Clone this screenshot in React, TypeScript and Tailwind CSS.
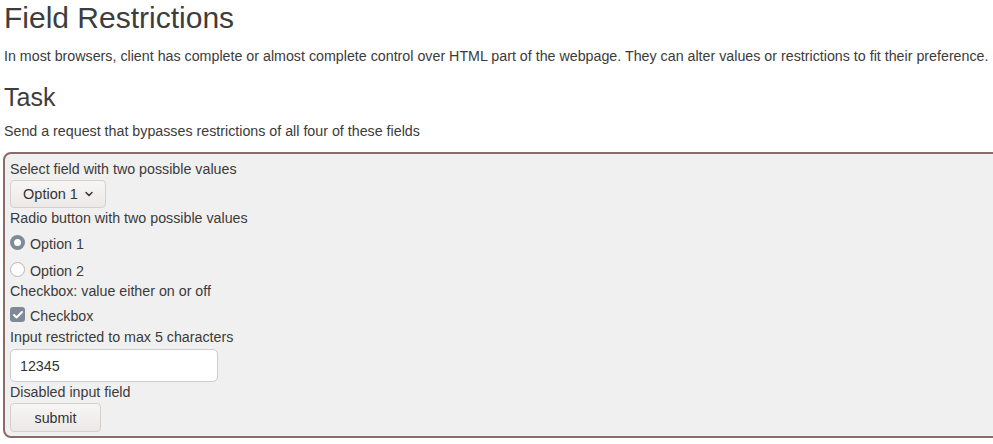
import { ChevronDown, Check } from 'lucide-react';

const App = () => {
  return (
    <div className="min-h-[444px] w-[993px] overflow-hidden bg-white text-[#3b3b3b] font-['Liberation_Sans',Arial,sans-serif]">
      <h1 className="pl-[4px] pt-[1px] text-[30px] leading-[34px] text-[#3d3d3d]">Field Restrictions</h1>
      <p className="pl-[4px] mt-[12px] text-[14.25px] leading-[18px]">
        In most browsers, client has complete or almost complete control over HTML part of the webpage. They can alter values or restrictions to fit their preference.
      </p>
      <h2 className="pl-[4px] mt-[18px] text-[25px] leading-[28px] text-[#3d3d3d]">Task</h2>
      <p className="pl-[4px] mt-[11px] text-[14.25px] leading-[18px]">Send a request that bypasses restrictions of all four of these fields</p>

      <form className="ml-[3px] mt-[12px] w-[1010px] rounded-[8px] border-2 border-[#8b6a68] bg-[#f1f0f0] pl-[5px] pt-[6px] pb-[4px] text-[14.25px] leading-[18px]">
        <div>Select field with two possible values</div>
        <div className="mt-[2px] flex h-[28px] w-[96px] items-center justify-center gap-[5px] rounded-[4px] border border-[#d4d0cc] bg-gradient-to-b from-[#f7f6f5] to-[#ebe9e7] pl-[2px] text-[14.5px] text-[#333]">
          <span>Option 1</span>
          <ChevronDown size={12} strokeWidth={3} className="text-[#333]" />
        </div>
        <div className="mt-[1px]">Radio button with two possible values</div>
        <label className="mt-[5px] flex items-center gap-[5px]">
          <span className="flex h-[15px] w-[15px] items-center justify-center rounded-full bg-[#7f8a97]">
            <span className="h-[7px] w-[7px] rounded-full bg-white" />
          </span>
          <span className="mt-[3px]">Option 1</span>
        </label>
        <label className="mt-[6px] flex items-center gap-[5px]">
          <span className="h-[15px] w-[15px] rounded-full border border-[#b8b5b2] bg-white" />
          <span className="mt-[3px]">Option 2</span>
        </label>
        <div className="mt-[2px]">Checkbox: value either on or off</div>
        <label className="mt-[4px] flex items-center gap-[5px]">
          <span className="flex h-[15px] w-[15px] items-center justify-center rounded-[3px] bg-[#7f8a97]">
            <Check size={12} strokeWidth={4} className="text-white" />
          </span>
          <span className="mt-[3px]">Checkbox</span>
        </label>
        <div className="mt-[3px]">Input restricted to max 5 characters</div>
        <input
          defaultValue="12345"
          className="mt-[3px] block h-[33px] w-[208px] rounded-[5px] border border-[#cfcbc8] bg-white px-[9px] text-[14.25px] text-[#333] outline-none"
        />
        <div className="mt-[1px]">Disabled input field</div>
        <button
          type="button"
          className="mt-[2px] flex h-[29px] w-[91px] items-center justify-center rounded-[4px] border border-[#d4d0cc] bg-gradient-to-b from-[#f7f6f5] to-[#ebe9e7] text-[14.25px] text-[#333]"
        >
          submit
        </button>
      </form>
    </div>
  );
};

export default App;
